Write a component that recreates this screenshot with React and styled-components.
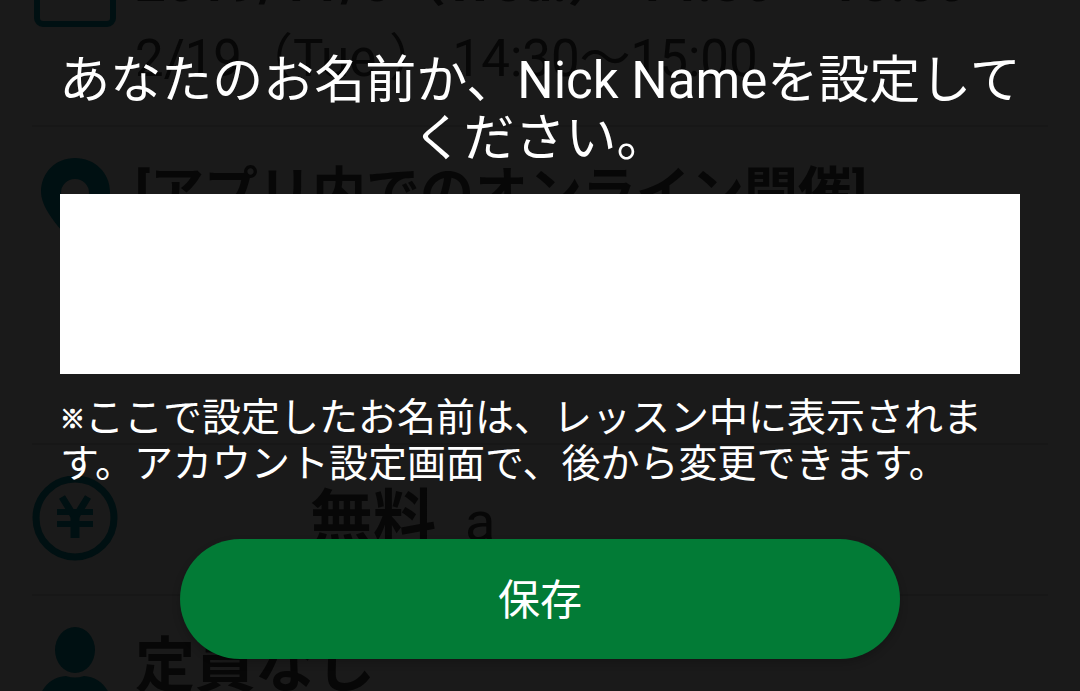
import React from 'react';
import styled, { createGlobalStyle } from 'styled-components';

const Global = createGlobalStyle`
  *, *::before, *::after { box-sizing: border-box; }
  body { margin: 0; background: #1a1a1a; font-family: Roboto, "Noto Sans CJK JP", sans-serif; }
`;

const Screen = styled.main`
  display: grid;
  min-height: 100vh;
  overflow: hidden;
`;

const Details = styled.ul`
  grid-area: 1 / 1;
  height: 100vh;
  margin: 0;
  padding: 0 32px;
  list-style: none;
  overflow: hidden;
  background: #1a1a1a;
  color: #070707;
`;

const Row = styled.li`
  display: flex;
  align-items: flex-start;
  gap: 17px;
  height: ${p => p.$height}px;
  padding-top: ${p => p.$top ?? 31}px;
  border-bottom: 2px solid #171717;
  white-space: nowrap;
`;

const Icon = styled.svg`
  flex: none;
  width: 86px;
  height: 86px;
  color: #001012;
`;

const Schedule = styled.div`
  display: flex;
  flex-direction: column;
  gap: 8px;
  align-self: flex-end;
  padding-bottom: 34px;
`;

const Time = styled.span`
  font-size: 51px;
  line-height: 64px;
`;

const Headline = styled.strong`
  font-size: ${p => p.$size || 54}px;
  font-weight: 700;
  line-height: ${p => (p.$size ? 80 : 72)}px;
`;

const Price = styled.div`
  display: flex;
  align-items: baseline;
  gap: 29px;
  padding: 4px 0 0 175px;
  font-size: 56px;
`;

const Dialog = styled.form`
  grid-area: 1 / 1;
  z-index: 1;
  display: flex;
  flex-direction: column;
  padding: 52px 60px 32px;
  color: #fff;
`;

const Title = styled.label`
  margin: 0 -8px;
  font-size: 51px;
  line-height: 58px;
  text-align: center;
`;

const NameInput = styled.input`
  width: 100%;
  height: 180px;
  margin-top: 26px;
  padding: 0 32px;
  border: 0;
  border-radius: 0;
  background: #fff;
  color: #222;
  font: inherit;
  font-size: 51px;
  outline: none;
`;

const Note = styled.p`
  margin: 21px 0 0;
  font-size: 39px;
  line-height: 46px;
`;

const Mark = styled.span`
  font-size: 25px;
  line-height: 1;
  vertical-align: 3px;
  -webkit-text-stroke: 1px currentColor;
`;

const SaveButton = styled.button`
  align-self: center;
  width: 75%;
  height: 120px;
  margin-top: 52px;
  padding: 0 0 6px;
  border: 0;
  border-radius: 60px;
  background: #027b36;
  box-shadow: 0 4px 8px rgba(0, 0, 0, 0.2);
  color: #fff;
  font: inherit;
  font-size: 42px;
`;

export default function App() {
  return (
    <>
      <Global />
      <Screen>
        <Details aria-hidden="true">
          <Row $height={127} $top={0}>
            <Icon viewBox="0 0 86 86">
              <rect x="5" y="-50" width="76" height="74" rx="6" fill="none" stroke="currentColor" strokeWidth="6" />
            </Icon>
            <Schedule>
              <Headline>2019/11/6（Wed.） 14:30〜15:00</Headline>
              <Time>2/19（Tue ） 14:30〜15:00</Time>
            </Schedule>
          </Row>
          <Row $height={318}>
            <Icon viewBox="0 0 86 86">
              <path
                fillRule="evenodd"
                fill="currentColor"
                d="M43 0C23 0 9 15 9 34C9 56 43 86 43 86S78 56 78 34C78 15 63 0 43 0ZM43 21A14 14 0 1 1 43 49A14 14 0 1 1 43 21Z"
              />
            </Icon>
            <Headline>[アプリ内でのオンライン開催]</Headline>
          </Row>
          <Row $height={151}>
            <Icon viewBox="0 0 86 86">
              <circle cx="43" cy="42" r="39" fill="none" stroke="currentColor" strokeWidth="7" />
              <path d="M30 21L43 42L56 21" fill="none" stroke="currentColor" strokeWidth="7" />
              <path d="M25 36H61M25 48H61" fill="none" stroke="currentColor" strokeWidth="6" />
              <path d="M43 40V62" fill="none" stroke="currentColor" strokeWidth="9" />
            </Icon>
            <Price><Headline $size={63}>無料</Headline>a</Price>
          </Row>
          <Row $height={160}>
            <Icon viewBox="0 0 86 86">
              <ellipse cx="43" cy="23" rx="20" ry="23" fill="currentColor" />
              <path d="M4 86C6 62 18 50 34 49Q43 52 52 49C68 50 80 62 82 86Z" fill="currentColor" />
            </Icon>
            <Headline $size={60}>定員なし</Headline>
          </Row>
        </Details>
        <Dialog onSubmit={e => e.preventDefault()}>
          <Title htmlFor="name">あなたのお名前か、Nick Nameを設定してください。</Title>
          <NameInput id="name" type="text" />
          <Note><Mark>※</Mark>ここで設定したお名前は、レッスン中に表示されます。アカウント設定画面で、後から変更できます。</Note>
          <SaveButton type="submit">保存</SaveButton>
        </Dialog>
      </Screen>
    </>
  );
}
